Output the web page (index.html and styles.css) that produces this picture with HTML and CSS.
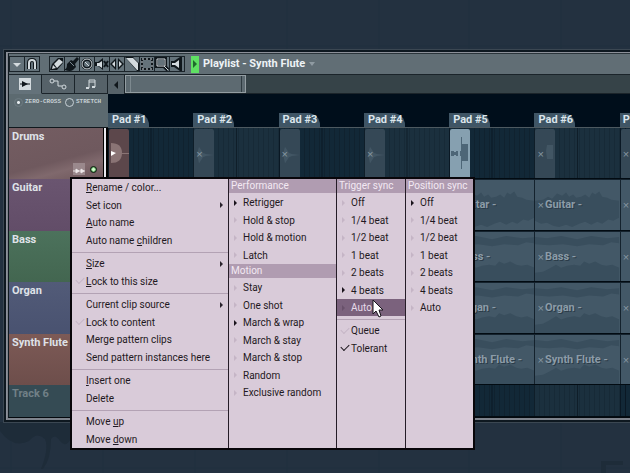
FILE: index.html
```
<!DOCTYPE html>
<html lang="en">
<head>
<meta charset="utf-8">
<title>Playlist - Synth Flute</title>
<link rel="stylesheet" href="styles.css">
</head>
<body>
<svg class="defs" aria-hidden="true">
  <symbol id="wave-mid" viewBox="0 0 84 48" preserveAspectRatio="none"><path d="M0 20l8-1 5-3 4 2 5-5 5 2 4-3 3 4 4-2 3 3 5-1 4-2 4 3 3-5 3 2 4-3 3 5 5 1 4 2 8 1v16l-6 3-5-1-6 4-5-2-6 3-6-3-6 2-7 3-6-2-7 2-6-1-6-3-6 1-6-3-6 1z"/></symbol>
  <symbol id="wave-low" viewBox="0 0 84 48" preserveAspectRatio="none"><path d="M0 5l12 1 14-2 16 3 14-3 16 2 12-1v6l-8-1-8 3-14-1-12 2-14-2-14 1-14-1z"/><path d="M0 40l8-1 6-3 7-4 5 3 6-2 7-1 6 1 4-4 5 2 6-2 6 3 5 1 6-1 7 3v13H0z"/></symbol>
  <symbol id="burst" viewBox="0 0 20 48" preserveAspectRatio="none"><path d="M3 24l2-7 2 3 2 3 3 1 8 1-8 1-3 1-2 3-2 3z"/></symbol>
</svg>

<main class="desktop">
  <svg class="backdrop" viewBox="0 0 630 473" preserveAspectRatio="xMidYMax slice" aria-hidden="true">
    <path class="grid" d="M11 0v473M103 0v473M195 0v473M287 0v473M379 0v473M469 0v473M561 0v473M0 46h630M0 468h630"/>
    <path class="shade" d="M0 422h72v15q-6 12-12 4-5-8-9-2 0 20-8 30h-2q8-20 4-30-8-8-16 2-16 8-29-10z"/>
    <path class="shade" d="M601 461h22v4h-17v8h-5z"/>
  </svg>

  <section class="window">
    <header class="titlebar">
      <div class="tools">
        <button aria-label="Options"><svg viewBox="0 0 14 14"><path class="lt" d="M3 6h8L7 10z"/></svg></button>
        <button aria-label="Snap"><svg viewBox="0 0 14 14"><path class="dk-line wide" d="M4 12V6q0-3 3-3t3 3v6"/><path class="lt-line" d="M4 12V6q0-3 3-3t3 3v6"/></svg></button>
      </div>
      <div class="tools">
        <button aria-label="Draw"><svg viewBox="0 0 14 14"><path class="dk" d="M0 13l2-6 6-6h5v5l-6 7z"/><path class="lt" d="M4 7l5-5 4 3-6 6zM2 12l1-4 3 3z"/></svg></button>
        <button aria-label="Paint"><svg viewBox="0 0 14 14"><path class="dk" d="M0 12q2 0 2-5l4-4 2 1 4-4 2 2-4 5 1 3-3 3q-3 2-8 0z"/><path class="md-line" d="M5 5l4 4"/></svg></button>
        <button aria-label="Delete"><svg viewBox="0 0 14 14"><circle class="dk-line wide" cx="7" cy="7" r="4"/><circle class="lt-line thin" cx="7" cy="7" r="5"/><circle class="md" cx="7" cy="7" r="3"/><path class="lt-line thin" d="M5 5l4 4"/></svg></button>
        <button aria-label="Mute"><svg viewBox="0 0 14 14"><path class="dk" d="M0 5h3l5-4v12L3 9H0z"/><path class="lt" d="M2 6h2l3-2v7L4 9H2z"/><path class="dk-line" d="M9 4l4 6M13 4l-4 6"/></svg></button>
        <button aria-label="Slip"><svg viewBox="0 0 14 14"><path class="dk" d="M0 7l6-6v12zM14 7L8 1v12z"/><path class="lt" d="M2 7l3-3v6zM12 7L9 4v6z"/></svg></button>
        <button aria-label="Slice"><svg viewBox="0 0 14 14"><path class="dk" d="M0 0l12 14h2V6L8 0z"/><path class="lt" d="M1 1h7l5 5v7h-1z"/><path class="md" d="M9 1h4v4z"/></svg></button>
        <button aria-label="Select"><svg viewBox="0 0 14 14"><rect class="dk-line" x="2" y="2" width="10" height="10"/><rect class="lt-line thin dash" x="2" y="2" width="10" height="10"/></svg></button>
        <button aria-label="Zoom"><svg viewBox="0 0 14 14"><path class="dk-line wide" d="M2 2h8v7H2zM9 9l4 4"/><path class="md" d="M3 3h6v5H3z"/><path class="lt-line thin" d="M2 2h8v7H2zM9 9l4 4"/></svg></button>
        <button aria-label="Play"><svg viewBox="0 0 14 14"><path class="dk" d="M1 4h3l6-4h2v14h-2L4 10H1z"/><path class="lt" d="M2 6h3l4-3v8L5 8H2z"/></svg></button>
      </div>
      <button class="go" aria-label="Switch target"><svg viewBox="0 0 8 16"><path d="M2 4l4 4-4 4z"/></svg></button>
      <h1>Playlist - Synth Flute</h1>
      <svg class="drop" viewBox="0 0 8 6"><path d="M1 1h6L4 5z"/></svg>
    </header>

    <nav class="modes">
      <button class="mode on" aria-label="Clips"><svg viewBox="0 0 12 12"><path class="lt" d="M0 0h12v12H0z"/><path class="dk" d="M3 3l6 3-6 3z"/><path class="dk-line thin" d="M1 6h10"/></svg></button>
      <button class="mode" aria-label="Automation"><svg class="broad" viewBox="0 0 18 12"><path class="lt-line thin" d="M5 3h4v5h4"/><circle class="lt-line thin" cx="3" cy="3" r="2"/><circle class="lt-line thin" cx="15" cy="9" r="2"/></svg></button>
      <button class="mode" aria-label="Patterns"><svg viewBox="0 0 12 12"><path class="lt-line thin" d="M4 10V2h6v7M4 4h6"/><path class="lt" d="M1 9h3v2H1zM7 8h3v2H7z"/></svg></button>
      <button class="back" aria-label="Scroll left"><svg viewBox="0 0 8 10"><path class="dk" d="M6 1v8L2 5z"/></svg></button>
      <div class="scroll"><div class="thumb"></div></div>
    </nav>

    <div class="playlist">
      <div class="opts">
        <label><input type="radio" name="opt" checked>ZERO-CROSS</label>
        <label><input type="radio" name="opt">STRETCH</label>
      </div>
      <div class="ruler"><span>Pad #1</span><span>Pad #2</span><span>Pad #3</span><span>Pad #4</span><span>Pad #5</span><span>Pad #6</span><span>P</span></div>

      <div class="tracks">
        <div class="track drums">Drums
          <div class="lamps"><svg viewBox="0 0 14 12"><path class="pad" d="M1 0h12v12H1z"/><path class="mark" d="M1 8h12M4 6v4l3-2zM9 6v4l3-2z"/></svg><i></i></div>
        </div>
        <div class="track guitar">Guitar</div>
        <div class="track bass">Bass</div>
        <div class="track organ">Organ</div>
        <div class="track flute">Synth Flute</div>
        <div class="track empty">Track 6</div>
      </div>

      <div class="lanes">
        <div class="lane open">
          <div class="bar"><div class="hit red"><svg viewBox="0 0 20 50"><path class="halo" d="M2 14q11 0 11 10T2 34z"/><path class="halo" d="M12 24h8v1h-8z"/><path class="tip" d="M2 22l5 2-5 3z"/></svg></div></div>
          <div class="bar"><div class="hit"><svg><use href="#burst"/></svg><b>×</b></div></div>
          <div class="bar"><div class="hit"><svg><use href="#burst"/></svg><b>×</b></div></div>
          <div class="bar"><div class="hit"><svg><use href="#burst"/></svg><b>×</b></div></div>
          <div class="bar"><div class="hit lit"><svg viewBox="0 0 20 50"><path d="M1 22h3v1h2v-1h2v5H6v-1H4v1H1zM10 22h1V8h1v7h6v17h-6v8h-1V27h-1z"/></svg></div></div>
          <div class="bar"><div class="hit"><svg viewBox="0 0 20 50"><path d="M11 22l1-6h6v14h-6z"/></svg><b>×</b></div></div>
          <div class="bar"><div class="hit"><b>×</b></div></div>
        </div>
        <div class="lane">
          <div class="clip"><svg><use href="#wave-mid"/></svg></div>
          <div class="clip"><svg><use href="#wave-mid"/></svg></div>
          <div class="clip"><svg><use href="#wave-mid"/></svg></div>
          <div class="clip"><svg><use href="#wave-mid"/></svg></div>
          <div class="clip"><svg><use href="#wave-mid"/></svg><b></b><span>Guitar -</span></div>
          <div class="clip"><svg><use href="#wave-mid"/></svg><b>×</b><span>Guitar -</span></div>
          <div class="clip"><b>×</b></div>
        </div>
        <div class="lane">
          <div class="clip"><svg><use href="#wave-low"/></svg></div>
          <div class="clip"><svg><use href="#wave-low"/></svg></div>
          <div class="clip"><svg><use href="#wave-low"/></svg></div>
          <div class="clip"><svg><use href="#wave-low"/></svg></div>
          <div class="clip"><svg><use href="#wave-low"/></svg><b></b><span>Bass -</span></div>
          <div class="clip"><svg><use href="#wave-low"/></svg><b>×</b><span>Bass -</span></div>
          <div class="clip"><b>×</b></div>
        </div>
        <div class="lane">
          <div class="clip"><svg><use href="#wave-low"/></svg></div>
          <div class="clip"><svg><use href="#wave-low"/></svg></div>
          <div class="clip"><svg><use href="#wave-low"/></svg></div>
          <div class="clip"><svg><use href="#wave-low"/></svg></div>
          <div class="clip"><svg><use href="#wave-low"/></svg><b></b><span>Organ -</span></div>
          <div class="clip"><svg><use href="#wave-low"/></svg><b>×</b><span>Organ -</span></div>
          <div class="clip"><b>×</b></div>
        </div>
        <div class="lane">
          <div class="clip"><svg><use href="#wave-low"/></svg></div>
          <div class="clip"><svg><use href="#wave-low"/></svg></div>
          <div class="clip"><svg><use href="#wave-low"/></svg></div>
          <div class="clip"><svg><use href="#wave-low"/></svg></div>
          <div class="clip"><svg><use href="#wave-low"/></svg><b></b><span>Synth Flute -</span></div>
          <div class="clip"><svg><use href="#wave-low"/></svg><b>×</b><span>Synth Flute -</span></div>
          <div class="clip"><b>×</b></div>
        </div>
        <div class="lane open"><div class="bar"></div><div class="bar"></div><div class="bar"></div><div class="bar"></div><div class="bar"></div><div class="bar"></div><div class="bar"></div></div>
      </div>
    </div>

    <div class="menu">
      <div class="col main">
        <ul>
          <li><button><u>R</u>ename / color...</button></li>
          <li><button class="sub">Set icon</button></li>
          <li><button><u>A</u>uto name</button></li>
          <li><button>Auto name <u>c</u>hildren</button></li>
        </ul>
        <ul>
          <li><button class="sub"><u>S</u>ize</button></li>
          <li><button class="tick"><u>L</u>ock to this size</button></li>
        </ul>
        <ul>
          <li><button class="sub">Current clip source</button></li>
          <li><button class="tick">Lock to content</button></li>
          <li><button>Merge pattern clips</button></li>
          <li><button>Send pattern instances here</button></li>
        </ul>
        <ul>
          <li><button><u>I</u>nsert one</button></li>
          <li><button>Delete</button></li>
        </ul>
        <ul>
          <li><button>Move <u>u</u>p</button></li>
          <li><button>Move <u>d</u>own</button></li>
        </ul>
      </div>
      <div class="col perf">
        <h2>Performance</h2>
        <ul>
          <li><button class="pick on">Retrigger</button></li>
          <li><button class="pick">Hold &amp; stop</button></li>
          <li><button class="pick">Hold &amp; motion</button></li>
          <li><button class="pick">Latch</button></li>
        </ul>
        <h2>Motion</h2>
        <ul>
          <li><button class="pick">Stay</button></li>
          <li><button class="pick">One shot</button></li>
          <li><button class="pick on">March &amp; wrap</button></li>
          <li><button class="pick">March &amp; stay</button></li>
          <li><button class="pick">March &amp; stop</button></li>
          <li><button class="pick">Random</button></li>
          <li><button class="pick">Exclusive random</button></li>
        </ul>
      </div>
      <div class="col trig">
        <h2>Trigger sync</h2>
        <ul>
          <li><button class="pick">Off</button></li>
          <li><button class="pick">1/4 beat</button></li>
          <li><button class="pick">1/2 beat</button></li>
          <li><button class="pick">1 beat</button></li>
          <li><button class="pick">2 beats</button></li>
          <li><button class="pick on">4 beats</button></li>
          <li><button class="pick hover">Auto</button></li>
        </ul>
        <ul>
          <li><button class="tick">Queue</button></li>
          <li><button class="tick on">Tolerant</button></li>
        </ul>
        <svg class="cursor" viewBox="0 0 12 19"><path d="M1 1v14l3-3 3 6 2-1-2-6h4z"/></svg>
      </div>
      <div class="col pos">
        <h2>Position sync</h2>
        <ul>
          <li><button class="pick on">Off</button></li>
          <li><button class="pick">1/4 beat</button></li>
          <li><button class="pick">1/2 beat</button></li>
          <li><button class="pick">1 beat</button></li>
          <li><button class="pick">2 beats</button></li>
          <li><button class="pick">4 beats</button></li>
          <li><button class="pick">Auto</button></li>
        </ul>
      </div>
    </div>
  </section>
</main>
</body>
</html>
```

FILE: styles.css
```
* { box-sizing: border-box; }
body { margin: 0; background: #233140; font: 10px/16px Roboto, sans-serif; }
button { appearance: none; border: 0; margin: 0; padding: 0; background: none; color: inherit; font: inherit; text-align: left; }
h1, h2, ul { margin: 0; padding: 0; font-size: inherit; list-style: none; }
svg { display: block; }
.defs { position: absolute; width: 0; height: 0; }

.lt { fill: #d3dade; }
.dk { fill: #10171c; }
.md { fill: #64727a; }
.lt-line, .dk-line, .md-line { fill: none; stroke: #d3dade; stroke-width: 2; }
.dk-line { stroke: #10171c; }
.md-line { stroke: #78868e; stroke-width: 1; }
.wide { stroke-width: 4; }
.thin { stroke-width: 1; }
.dash { stroke-dasharray: 2 2; }

.desktop { position: relative; min-height: 100vh; padding: 50px 0 0 4px; overflow: hidden; }
.backdrop { position: absolute; inset: 0; width: 100%; height: 100%; }
.grid { stroke: #21303e; fill: none; }
.shade { fill: #1e2c39; }

.window { position: relative; padding: 1px 0 2px 1px; border: 2px solid #0e1820; border-right: 0; background: #7e838c; outline: 1px solid #3b4752; box-shadow: inset 1px 1px #8c9099; }
.titlebar, .modes, .playlist { margin-left: 1px; border-left: 1px solid #111b22; }
.titlebar { display: flex; align-items: center; height: 21px; background: #616e75; border-top: 1px solid #2b353b; color: #eef3f6; }
.tools { display: flex; margin-right: 9px; border: 1px solid #1b242a; background: #1b242a; gap: 1px; }
.tools button { width: 14px; height: 14px; background: #64727a; }
.tools svg { width: 14px; height: 14px; }
.tools + .tools { margin-right: 6px; }
.go { width: 8px; height: 17px; background: #5fe063; }
.go svg { width: 8px; height: 16px; fill: #1e6b2b; }
.titlebar h1 { margin-left: 4px; font: bold 11px/16px Roboto, sans-serif; }
.drop { width: 8px; height: 6px; margin-left: 3px; fill: #8f9ba2; }

.modes { display: flex; height: 20px; background: #364348; border-top: 1px solid #1b242a; }
.mode { display: grid; place-items: center; width: 33px; background: #566269; border: solid #1b242a; border-width: 0 1px 1px 0; }
.mode.on { border-bottom-color: #64727a; background: #64727a; }
.mode svg { width: 12px; height: 12px; }
.mode .broad { width: 18px; }
.back { display: grid; place-items: center; width: 17px; background: #566269; border-right: 1px solid #1b242a; }
.back svg { width: 8px; height: 10px; }
.scroll { flex: 1; border-bottom: 1px solid #1b242a; }
.thumb { width: 24%; height: 18px; border: 1px solid #939da2; background: #5d6a71; box-shadow: inset 4px 0 #5d6a71, inset 5px 0 #7d898f, inset -3px 0 #5d6a71, inset -4px 0 #2f3b41; }

.playlist { display: grid; grid-template-columns: 99px 1fr; background: #04090e; border-bottom: 1px solid #04090e; }
.opts { display: flex; gap: 4px; height: 34px; padding: 2px 0 0 5px; background: #5c6a70; border-bottom: 1px solid #10181d; color: #c7d0d5; font: bold 6px/12px "Liberation Mono", monospace; white-space: nowrap; }
.opts label { display: flex; align-items: center; gap: 2px; height: 12px; }
.opts input { appearance: none; width: 9px; height: 9px; margin: 0; border: 1px solid #c7d0d5; border-radius: 50%; }
.opts input:checked { border-color: #6d7b82; background: radial-gradient(#e6ecef 1px, #5c6a70 2px); }
.ruler, .lane { display: grid; grid-template-columns: repeat(6, minmax(0, 1634fr)) minmax(0, 196fr); overflow: hidden; }
.ruler { align-items: end; border-bottom: 1px solid #4d5960; background: #000e1b; }
.ruler span { justify-self: start; width: 41px; height: 14px; padding-left: 4px; border-radius: 0 12px 0 0; background: #3f5565; color: #dbe5ec; font: bold 11px/14px Roboto, sans-serif; white-space: nowrap; }
.ruler span:last-child { width: 100%; padding-left: 3px; border-radius: 0; }

.tracks, .lanes { display: grid; grid-template-rows: 51px 52px 51px 52px 51px 32px; }
.tracks { padding-right: 4px; background: linear-gradient(to left, #000 0 2px, #e8e8ee 2px 4px, #000 4px); }
.track { position: relative; padding: 0 3px; color: #dfe2e8; font: bold 11px/17px Roboto, sans-serif; border-right: 1px solid #000; }
.drums { background: linear-gradient(165deg, #745d62, #6f595e 60%, #80696d 75%, #6c555a); }
.guitar { background: linear-gradient(#6a5570, #624d68); }
.bass { background: linear-gradient(#4c725c, #436650); }
.organ { background: linear-gradient(#525b78, #495270); }
.flute { background: linear-gradient(#7d5a56, #6d4e4b); }
.empty { background: #354b54; color: #718087; }
.lamps { display: flex; justify-content: flex-end; align-items: center; gap: 4px; padding: 18px 3px 0 0; }
.lamps svg { width: 14px; height: 12px; }
.pad { fill: #9a888c; }
.mark { fill: #fff; stroke: #e9e2e4; stroke-width: 1; }
.lamps i { width: 7px; height: 7px; border: 1px solid #0b210e; border-radius: 50%; background: radial-gradient(#cfffca 1px, #2d7a33 3px); }

.lane { border-bottom: 1px solid #020b12; background: #020b12; }
.bar { padding: 1px 0 1px 1px; background: linear-gradient(90deg, #0a1824 1px, transparent 1px) 0 0 / 50% 100%, repeating-linear-gradient(90deg, #10222f 0 1px, #122837 1px 5px); }
.bar:nth-child(even) { background: linear-gradient(90deg, #0f1e29 1px, transparent 1px) 0 0 / 50% 100%, repeating-linear-gradient(90deg, #172a37 0 1px, #1b303e 1px 5px); }
.hit { position: relative; width: 20px; height: 100%; border-radius: 2px; background: #354856; overflow: hidden; }
.hit svg { position: absolute; inset: 0; width: 100%; height: 100%; fill: #425664; }
.hit b, .clip b { position: relative; min-width: 6px; color: #8696a1; font: 11px/50px "Liberation Sans", sans-serif; }
.hit b { padding-left: 2px; }
.hit.red { background: #5c474b; }
.hit .halo { fill: #8a7475; }
.hit .tip { fill: #fff; }
.hit.lit { background: #86a0b0; }
.hit.lit svg { fill: #4d6677; }
.clip { position: relative; display: flex; align-items: center; gap: 1px; padding-left: 2px; border-left: 1px solid #14222d; border-top: 1px solid #14222d; background: #435867; color: #8c9ca8; font: bold 11px/16px Roboto, sans-serif; white-space: nowrap; overflow: hidden; }
.clip span { position: relative; text-shadow: 1px 1px #2b3c49; }
.clip svg { position: absolute; inset: 0; width: 100%; height: 100%; fill: #394e5d; }

.menu { position: absolute; left: 64px; top: 125px; display: grid; grid-template-columns: 156px 108px 69px 68px; border: 2px solid #08060a; background: #d9cbd9; color: #1f1922; }
.col + .col { border-left: 1px solid #251c27; }
.col h2 { height: 14px; margin-bottom: 1px; padding-left: 2px; background: #b09cb1; color: #f3e9f3; font-weight: 400; line-height: 14px; white-space: nowrap; }
.col ul + ul { margin-top: 3px; padding-top: 2px; border-top: 1px solid #b3a2b4; }
.col li { height: 17px; }
.col li:nth-child(even) { height: 18px; }
.col li button { position: relative; display: block; width: 100%; height: 100%; padding-left: 14px; line-height: 17px; white-space: nowrap; }
.sub::after, .pick::before { content: ""; position: absolute; top: 6px; border: solid transparent; border-width: 3px 0 3px 3px; border-left-color: #29222c; }
.sub::after { right: 5px; }
.pick::before { left: 5px; border-left-color: #c5b5c6; }
.pick.on::before { border-left-color: #1a141c; }
.tick::before { content: ""; position: absolute; left: 4px; top: 5px; width: 7px; height: 4px; border: solid #c5b5c6; border-width: 0 0 1px 1px; transform: rotate(-45deg); }
.tick.on::before { border-color: #1a141c; }
.pick.hover { background: #7b627d; color: #e8dcea; }
.pick.hover::before { border-left-color: #69516b; }
.trig { position: relative; }
.cursor { position: absolute; left: 35px; top: 120px; width: 12px; height: 19px; fill: #fff; stroke: #17121a; stroke-width: 1; }
```
